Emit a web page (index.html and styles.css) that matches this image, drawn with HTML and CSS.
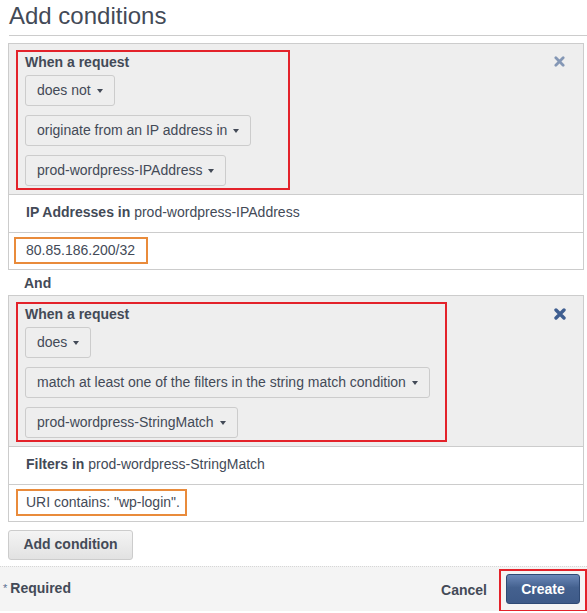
FILE: index.html
```html
<!DOCTYPE html>
<html lang="en">
<head>
<meta charset="utf-8">
<title>Add conditions</title>
<link rel="stylesheet" href="styles.css">
</head>
<body>
<div class="page">
  <h1 class="title">Add conditions</h1>

  <div class="content">
    <div class="panel">
      <div class="panel-head">
        <div class="rule rule-1">
          <div class="rule-label">When a request</div>
          <div class="dropdowns">
            <button class="dd">does not<span class="caret"></span></button>
            <button class="dd">originate from an IP address in<span class="caret"></span></button>
            <button class="dd">prod-wordpress-IPAddress<span class="caret"></span></button>
          </div>
        </div>
        <span class="close close-faded">
          <svg width="11" height="11" viewBox="0 0 12 12"><path d="M2 2 L10 10 M10 2 L2 10" stroke="#3f5e90" stroke-width="3" stroke-linecap="round"/></svg>
        </span>
      </div>
      <div class="row"><b>IP Addresses in</b> prod-wordpress-IPAddress</div>
      <div class="row row-value"><span class="value value-1">80.85.186.200/32</span></div>
    </div>

    <div class="and">And</div>

    <div class="panel">
      <div class="panel-head">
        <div class="rule rule-2">
          <div class="rule-label">When a request</div>
          <div class="dropdowns">
            <button class="dd">does<span class="caret"></span></button>
            <button class="dd">match at least one of the filters in the string match condition<span class="caret"></span></button>
            <button class="dd">prod-wordpress-StringMatch<span class="caret"></span></button>
          </div>
        </div>
        <span class="close">
          <svg width="12" height="12" viewBox="0 0 12 12"><path d="M2 2 L10 10 M10 2 L2 10" stroke="#3f5e90" stroke-width="3.4" stroke-linecap="round"/></svg>
        </span>
      </div>
      <div class="row"><b>Filters in</b> prod-wordpress-StringMatch</div>
      <div class="row row-value"><span class="value value-2">URI contains: "wp-login".</span></div>
    </div>

    <button class="add-btn">Add condition</button>
  </div>

  <div class="footer">
    <div class="required"><span class="asterisk">*</span><b>Required</b></div>
    <div class="actions">
      <span class="cancel">Cancel</span>
      <div class="create-wrap"><button class="create">Create</button></div>
    </div>
  </div>
</div>
</body>
</html>
```
FILE: styles.css
```css
* { box-sizing: border-box; }

body {
  margin: 0;
  background: #ffffff;
  font-family: "Liberation Sans", Arial, sans-serif;
  font-size: 14px;
  color: #434a57;
}

.page {
  width: 587px;
}

.title {
  margin: 0 0 7px 9px;
  padding: 2px 0 5px 0;
  font-size: 24px;
  line-height: 28px;
  font-weight: normal;
  color: #434a57;
  border-bottom: 1px solid #cccccc;
}

.content {
  padding: 0 3px 0 8px;
}

.panel {
  width: 576px;
  border: 1px solid #cccccc;
  background: #ffffff;
}

.panel-head {
  display: flex;
  align-items: flex-start;
  background: #eeeeee;
  padding: 6px 17px 4px 7px;
  border-bottom: 1px solid #cccccc;
}

.rule {
  border: 2px solid #e3222a;
  padding: 2px 7px 2px 7px;
  height: 140px;
}

.rule-1 { width: 274px; }
.rule-2 { width: 431px; }

.rule-label {
  font-weight: bold;
  line-height: 17px;
  margin-bottom: 4px;
}

.dropdowns {
  display: flex;
  flex-direction: column;
  align-items: flex-start;
  gap: 9px;
}

.dd {
  font-family: "Liberation Sans", Arial, sans-serif;
  font-size: 14px;
  color: #434a57;
  background: #eeeeee;
  border: 1px solid #cccccc;
  border-radius: 3px;
  padding: 5px 11px 5px 11px;
  line-height: 19px;
  height: 31px;
  display: inline-flex;
  align-items: center;
  white-space: nowrap;
}

.caret {
  display: inline-block;
  width: 0;
  height: 0;
  margin-left: 6px;
  margin-top: 1px;
  border-top: 4px solid #434a57;
  border-left: 3.5px solid transparent;
  border-right: 3.5px solid transparent;
}

.close {
  margin-left: auto;
  margin-top: 6px;
  display: flex;
}

.close-faded {
  opacity: 0.6;
  margin-top: 6px;
  margin-right: 1px;
}

.row {
  line-height: 17px;
  padding: 9px 17px 11px 17px;
  border-bottom: 1px solid #cccccc;
}

.row b { color: #434a57; }

.row-value {
  padding: 4px 0 5px 0;
  border-bottom: none;
}

.value {
  display: inline-block;
  border: 2px solid #e98b3b;
  padding: 3px 10px 3px 10px;
  line-height: 17px;
}

.value-1 { margin-left: 5px; padding-right: 11px; }
.value-2 { margin-left: 7px; padding-left: 8px; padding-right: 5px; }

.and {
  font-weight: bold;
  line-height: 17px;
  padding: 5px 0 3px 16px;
}

.add-btn {
  display: block;
  margin-top: 8px;
  width: 125px;
  height: 30px;
  font-family: "Liberation Sans", Arial, sans-serif;
  font-size: 14px;
  font-weight: bold;
  color: #434a57;
  text-align: center;
  white-space: nowrap;
  padding: 0 0 2px 0;
  border: 1px solid #cccccc;
  border-radius: 3px;
  background: linear-gradient(#f4f4f4, #e2e2e2);
}

.footer {
  margin-top: 6px;
  height: 45px;
  background: #f4f4f4;
  border-top: 1px dotted #d6d6d6;
  display: flex;
  justify-content: space-between;
  align-items: flex-start;
}

.required {
  padding: 13px 0 0 3px;
  line-height: 17px;
}

.asterisk {
  font-size: 11px;
  vertical-align: top;
  margin-right: 3px;
  color: #5b6f90;
}

.actions {
  display: flex;
  align-items: flex-start;
}

.cancel {
  font-weight: bold;
  line-height: 17px;
  margin-top: 15px;
  margin-right: 12px;
  color: #434a57;
}

.create-wrap {
  margin-top: 2px;
  border: 2px solid #e3222a;
  padding: 3px 5px 3px 5px;
  height: 43px;
}

.create {
  width: 74px;
  height: 30px;
  border: 1px solid #2f4a75;
  border-radius: 3px;
  background: linear-gradient(#6b88b8, #44618f 45%, #3e5a88);
  color: #ffffff;
  font-family: "Liberation Sans", Arial, sans-serif;
  font-size: 14px;
  font-weight: bold;
  padding: 0;
}
```
